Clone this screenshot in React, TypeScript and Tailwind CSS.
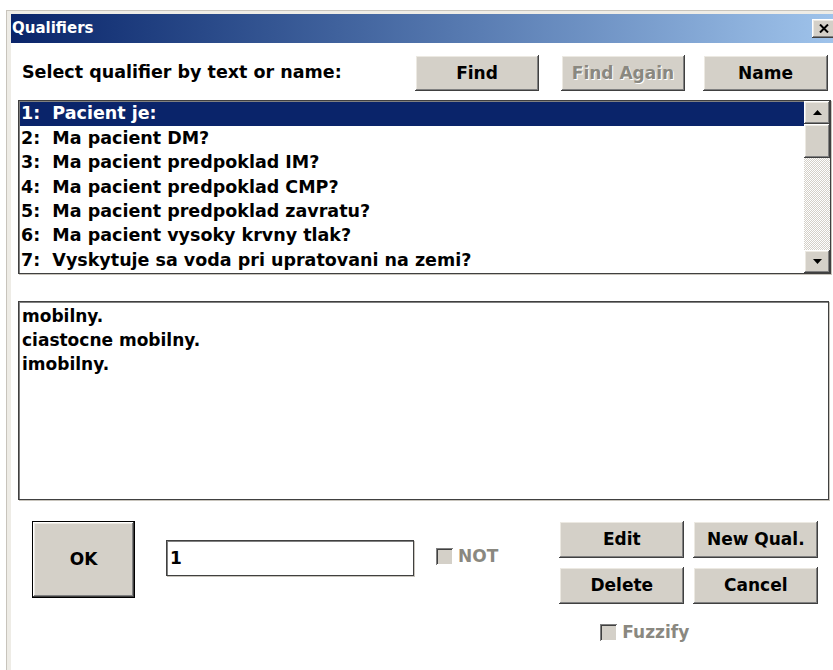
import { useState } from "react";

const QUALIFIERS = [
  "Pacient je:",
  "Ma pacient DM?",
  "Ma pacient predpoklad IM?",
  "Ma pacient predpoklad CMP?",
  "Ma pacient predpoklad zavratu?",
  "Ma pacient vysoky krvny tlak?",
  "Vyskytuje sa voda pri upratovani na zemi?",
];

const VALUES = ["mobilny.", "ciastocne mobilny.", "imobilny."];

// classic raised 3D bevel
const raised =
  "bg-[#d4d0c8] shadow-[inset_-1px_-1px_#404040,inset_1px_1px_#ffffff,inset_-2px_-2px_#808080,inset_2px_2px_#ece9e2]";

// sunken field edge
const sunken =
  "bg-white border border-[#404040] shadow-[1px_1px_0_#c8c4bc,inset_1px_1px_0_#808080]";

const Button = ({
  label,
  disabled,
  className = "",
}: {
  label: string;
  disabled?: boolean;
  className?: string;
}) => (
  <button
    className={`${raised} flex items-center justify-center text-[17px] font-bold leading-none ${
      disabled
        ? "text-[#8a8880] [text-shadow:1px_1px_0_#ffffff]"
        : "text-black"
    } ${className}`}
  >
    {label}
  </button>
);

const Check = ({ label }: { label: string }) => (
  <div className="flex items-center gap-[5px] text-[17px] font-bold text-[#8a8880]">
    <span className="w-[17px] h-[17px] bg-[#d4d0c8] shadow-[inset_1px_1px_#808080,inset_-1px_-1px_#ffffff,inset_2px_2px_#404040]" />
    <span className="leading-none">{label}</span>
  </div>
);

const ScrollBar = () => (
  <div className="w-[26px] flex flex-col bg-[repeating-conic-gradient(#ffffff_0_25%,#d4d0c8_0_50%)] bg-[length:2px_2px]">
    <div className={`${raised} h-[23px] flex items-center justify-center`}>
      <svg width="9" height="5" viewBox="0 0 9 5">
        <path d="M4.5 0 L9 5 L0 5 Z" fill="#000" />
      </svg>
    </div>
    <div className={`${raised} h-[34px]`} />
    <div className="flex-1" />
    <div className={`${raised} h-[23px] flex items-center justify-center`}>
      <svg width="9" height="5" viewBox="0 0 9 5">
        <path d="M0 0 L9 0 L4.5 5 Z" fill="#000" />
      </svg>
    </div>
  </div>
);

export default function App() {
  const [selected, setSelected] = useState(0);

  return (
    <div className="w-[833px] h-[670px] overflow-hidden bg-white pl-[6px] pt-[10px] font-['DejaVu_Sans','Liberation_Sans',sans-serif]">
      <div className="w-[860px] h-[700px] border-l border-t border-[#c8c4bc] bg-[#eeece6] pl-[4px] pt-[3px]">
        <div className="h-full bg-white">
          {/* title bar */}
          <div className="h-[29px] flex items-center justify-between pl-[1px] bg-gradient-to-r from-[#0a246a] to-[#a6caf0]">
            <span className="text-white text-[15px] font-bold">Qualifiers</span>
            <div
              className={`${raised} w-[24px] h-[19px] mr-[30px] flex items-center justify-center`}
            >
              <svg width="10" height="9" viewBox="0 0 10 9">
                <path d="M1 0.5 L9 8.5 M9 0.5 L1 8.5" stroke="#000" strokeWidth="2" />
              </svg>
            </div>
          </div>

          <div className="pl-[7px]">
            {/* search row */}
            <div className="flex items-center pt-[12px] h-[48px]">
              <span className="pl-[4px] w-[397px] text-[17.5px] font-bold leading-none">
                Select qualifier by text or name:
              </span>
              <Button label="Find" className="w-[124px] h-[36px]" />
              <Button label="Find Again" disabled className="w-[124px] h-[36px] ml-[22px]" />
              <Button label="Name" className="w-[125px] h-[36px] ml-[18px]" />
            </div>

            {/* qualifier list */}
            <div className={`${sunken} mt-[9px] w-[813px] h-[174px] flex`}>
              <ul className="flex-1 pl-[1px] pt-[1px]">
                {QUALIFIERS.map((q, i) => (
                  <li
                    key={i}
                    onClick={() => setSelected(i)}
                    className={`h-[24.4px] flex items-center pl-[1px] whitespace-pre text-[17.5px] font-bold leading-none ${
                      i === selected ? "bg-[#0a246a] text-white" : "text-black"
                    }`}
                  >
                    {`${i + 1}:  ${q}`}
                  </li>
                ))}
              </ul>
              <ScrollBar />
            </div>

            {/* values of the selected qualifier */}
            <div className={`${sunken} mt-[27px] w-[811px] h-[199px] pl-[3px] pt-[6px]`}>
              {VALUES.map((v) => (
                <div key={v} className="h-[24px] text-[17px] font-bold leading-none">
                  {v}
                </div>
              ))}
            </div>

            {/* actions */}
            <div className="flex items-start mt-[21px]">
              <div className="ml-[14px] p-[1px] bg-black">
                <Button label="OK" className="w-[101px] h-[75px]" />
              </div>
              <div className={`${sunken} ml-[31px] mt-[19px] w-[248px] h-[36px] pl-[3px] flex items-center text-[17px] font-bold leading-none`}>
                1
              </div>
              <div className="ml-[22px] mt-[27px]">
                <Check label="NOT" />
              </div>
              <div className="ml-[61px] flex flex-col">
                <div className="grid grid-cols-[125px_125px] gap-x-[9px] gap-y-[9px]">
                  <Button label="Edit" className="h-[37px]" />
                  <Button label="New Qual." className="h-[37px]" />
                  <Button label="Delete" className="h-[37px]" />
                  <Button label="Cancel" className="h-[37px]" />
                </div>
                <div className="ml-[41px] mt-[20px]">
                  <Check label="Fuzzify" />
                </div>
              </div>
            </div>
          </div>
        </div>
      </div>
    </div>
  );
}
